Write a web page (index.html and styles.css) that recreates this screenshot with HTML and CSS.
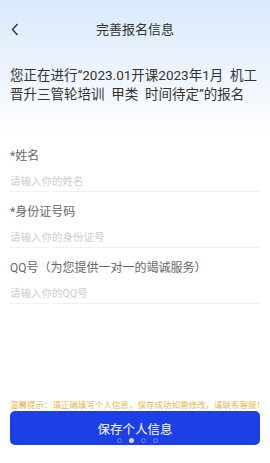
FILE: index.html
```html
<!DOCTYPE html>
<html lang="zh-CN">
<head>
  <meta charset="UTF-8">
  <meta name="viewport" content="width=device-width, initial-scale=1.0">
  <title>完善报名信息</title>
  <link rel="stylesheet" href="styles.css">
</head>
<body>
  <div class="page">
    <header class="topbar">
      <span class="back">
        <svg width="8" height="13" viewBox="0 0 8 13"><path d="M6.5 1 L1.5 6.5 L6.5 12" fill="none" stroke="#333" stroke-width="1.4"/></svg>
      </span>
      <div class="title">完善报名信息</div>
    </header>

    <p class="intro">您正在进行“2023.01开课2023年1月&nbsp;&nbsp;机工晋升三管轮培训&nbsp;&nbsp;甲类&nbsp;&nbsp;时间待定”的报名</p>

    <form class="form">
      <div class="field">
        <label>*姓名</label>
        <input type="text" placeholder="请输入你的姓名">
      </div>
      <div class="field">
        <label>*身份证号码</label>
        <input type="text" placeholder="请输入你的身份证号">
      </div>
      <div class="field">
        <label>QQ号（为您提供一对一的竭诚服务）</label>
        <input type="text" placeholder="请输入你的QQ号">
      </div>
    </form>

    <div class="spacer"></div>

    <p class="tip">温馨提示：请正确填写个人信息，保存成功如需修改，请联系客服！</p>
    <button class="save">
      保存个人信息
      <span class="dots"><i></i><i class="on"></i><i></i><i></i></span>
    </button>
  </div>
</body>
</html>
```

FILE: styles.css
```css
* {
  box-sizing: border-box;
}
html, body {
  margin: 0;
  height: 100%;
}
body {
  font-family: Roboto, "Noto Sans CJK SC", sans-serif;
  color: #333;
  background: linear-gradient(180deg, #d9e9fb 0%, #e9f2fc 60px, #ffffff 135px);
}
.page {
  display: flex;
  flex-direction: column;
  height: 463px;
  padding: 0 10px;
}
.topbar {
  position: relative;
  height: 56px;
  display: flex;
  align-items: center;
  justify-content: center;
}
.back {
  position: absolute;
  left: 1px;
  top: 21px;
}
.title {
  font-size: 13px;
  color: #333;
}
.intro {
  margin: 10px 0 0;
  font-size: 13.5px;
  line-height: 19px;
  color: #333;
}
.form {
  margin-top: 44px;
}
.field {
  border-bottom: 1px solid #eef0f3;
  margin-bottom: 12px;
}
.field label {
  display: block;
  font-size: 12px;
  line-height: 16px;
  color: #666;
}
.field input {
  display: block;
  width: 100%;
  border: none;
  background: transparent;
  padding: 7px 0 0;
  height: 27px;
  line-height: 20px;
  font-family: inherit;
  font-size: 10.5px;
  color: #333;
  outline: none;
}
.field input::placeholder {
  color: #cccccc;
}
.spacer {
  flex: 1;
}
.tip {
  margin: 0 0 1px;
  font-size: 8.5px;
  line-height: 10px;
  color: #e9b64a;
  white-space: nowrap;
}
.save {
  position: relative;
  height: 34px;
  margin-bottom: 18px;
  border: none;
  border-radius: 5px;
  background: #1d3fe6;
  color: #fff;
  font-family: inherit;
  font-size: 12.5px;
}
.dots {
  position: absolute;
  left: 107px;
  bottom: 2px;
  display: flex;
  gap: 7px;
}
.dots i {
  width: 5px;
  height: 5px;
  border-radius: 50%;
  border: 1px solid rgba(255, 255, 255, 0.35);
}
.dots i.on {
  background: rgba(255, 255, 255, 0.8);
  border-color: transparent;
}
```
